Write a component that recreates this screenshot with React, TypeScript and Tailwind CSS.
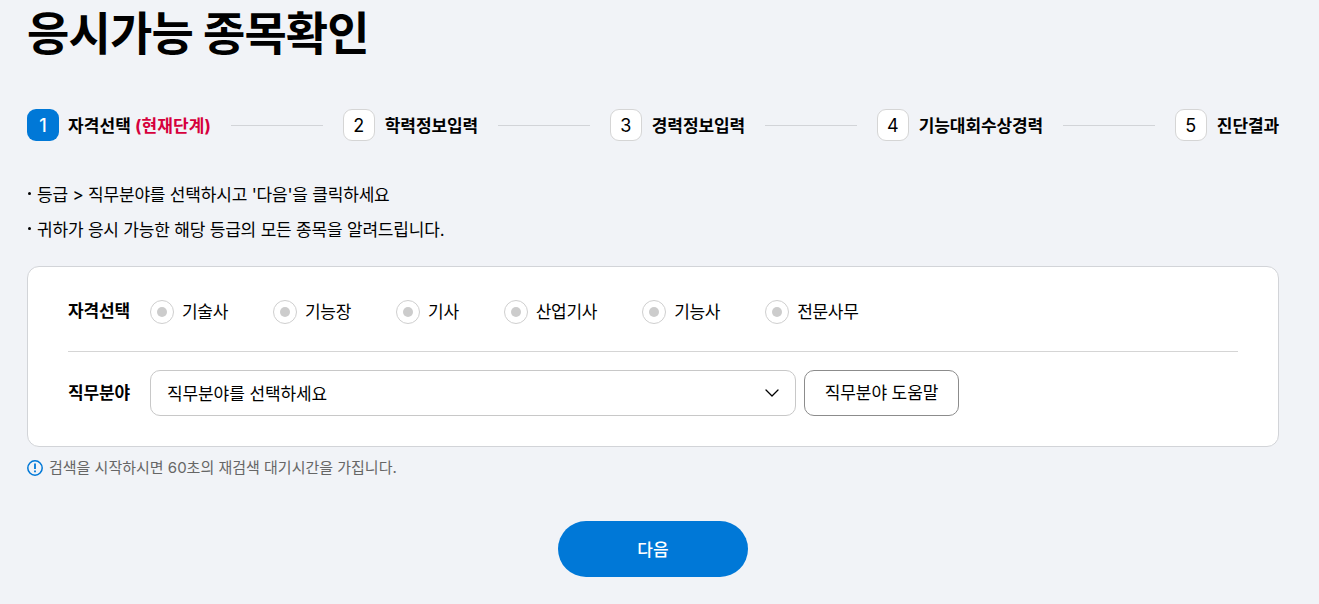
import { Fragment } from "react";
import { ChevronDown } from "lucide-react";

const steps = ["학력정보입력", "경력정보입력", "기능대회수상경력", "진단결과"];
const grades = ["기술사", "기능장", "기사", "산업기사", "기능사", "전문사무"];
const notes = ["등급 > 직무분야를 선택하시고 '다음'을 클릭하세요", "귀하가 응시 가능한 해당 등급의 모든 종목을 알려드립니다."];

const Radio = ({ label }: { label: string }) => (
  <label className="flex items-center gap-[8px]">
    <span className="flex h-[24px] w-[24px] items-center justify-center rounded-full border border-[#cfcfcf] bg-white">
      <span className="h-[10px] w-[10px] rounded-full bg-[#cccccc]" />
    </span>
    <span className="text-[17px] leading-[24px] tracking-[-0.3px] text-black">{label}</span>
  </label>
);

const App = () => {
  return (
    <div className="h-[604px] overflow-hidden bg-[#f1f3f7] px-[27px] font-['Inter','Noto_Sans_CJK_KR',sans-serif] text-black">
      <h1 className="h-[109px] pt-[1px] text-[46px] leading-[64px] font-bold tracking-[-0.85px]">응시가능 종목확인</h1>

      <div className="flex h-[32px] w-[1252px] items-center">
        <span className="flex h-[32px] w-[32px] items-center justify-center rounded-[9px] bg-[#0078d7] text-[18px] font-medium text-white">1</span>
        <span className="ml-[9px] pt-[4px] text-[17px] font-bold tracking-[0.1px]">
          자격선택 <span className="text-[#d6003c]">(현재단계)</span>
        </span>
        {steps.map((step, i) => (
          <Fragment key={step}>
            <div className="mx-[20px] h-px flex-1 bg-[#d2d4d8]" />
            <span className="flex h-[32px] w-[32px] items-center justify-center rounded-[9px] border border-[#d5d5d5] bg-white text-[18px]">
              {i + 2}
            </span>
            <span className="ml-[10px] pt-[4px] text-[17px] font-bold tracking-[-0.1px]">{step}</span>
          </Fragment>
        ))}
      </div>

      <ul className="mt-[39px] space-y-[6px] text-[17px] leading-[28px] tracking-[-0.2px]">
        {notes.map((note) => (
          <li key={note} className="flex">
            <span className="mt-[12px] mr-[6px] ml-px h-[3px] w-[3px] rounded-full bg-black" />
            <span className="pt-[1px]">{note}</span>
          </li>
        ))}
      </ul>

      <div className="mt-[22px] h-[181px] w-[1252px] rounded-[12px] border border-[#d2d4d8] bg-white px-[40px]">
        <div className="flex h-[85px] items-center border-b border-[#d5d5d5] pt-[6px]">
          <span className="w-[82px] text-[17px] font-bold tracking-[-0.1px]">자격선택</span>
          <div className="flex gap-[45px]">
            {grades.map((grade) => (
              <Radio key={grade} label={grade} />
            ))}
          </div>
        </div>
        <div className="mt-[18px] flex items-center">
          <span className="w-[82px] pt-[2px] text-[17px] font-bold tracking-[-0.1px]">직무분야</span>
          <div className="flex h-[46px] w-[646px] items-center justify-between rounded-[10px] border border-[#c8c8c8] pr-[11px] pl-[16px] text-[17px] tracking-[-0.1px]">
            <span className="pt-[4px]">직무분야를 선택하세요</span>
            <ChevronDown size={24} strokeWidth={1.3} />
          </div>
          <button className="ml-[8px] h-[46px] w-[155px] rounded-[10px] border border-[#8c8c8c] bg-white pt-[2px] text-[17px] tracking-[-0.1px]">
            직무분야 도움말
          </button>
        </div>
      </div>

      <p className="mt-[9px] flex items-center gap-[6px] text-[15px] leading-[22px] text-[#666666]">
        <svg width="16" height="16" viewBox="0 0 16 16" fill="none">
          <circle cx="8" cy="8" r="7.2" stroke="#0078d7" strokeWidth="1.5" />
          <path d="M8 3.6v5.4M8 10.6v1.6" stroke="#0078d7" strokeWidth="1.8" />
        </svg>
        <span className="pt-[1px]">검색을 시작하시면 60초의 재검색 대기시간을 가집니다.</span>
      </p>

      <div className="mt-[42px] flex w-[1252px] justify-center">
        <button className="h-[56px] w-[190px] rounded-full bg-[#0078d7] pt-[4px] text-[17px] font-medium text-white">다음</button>
      </div>
    </div>
  );
};

export default App;
